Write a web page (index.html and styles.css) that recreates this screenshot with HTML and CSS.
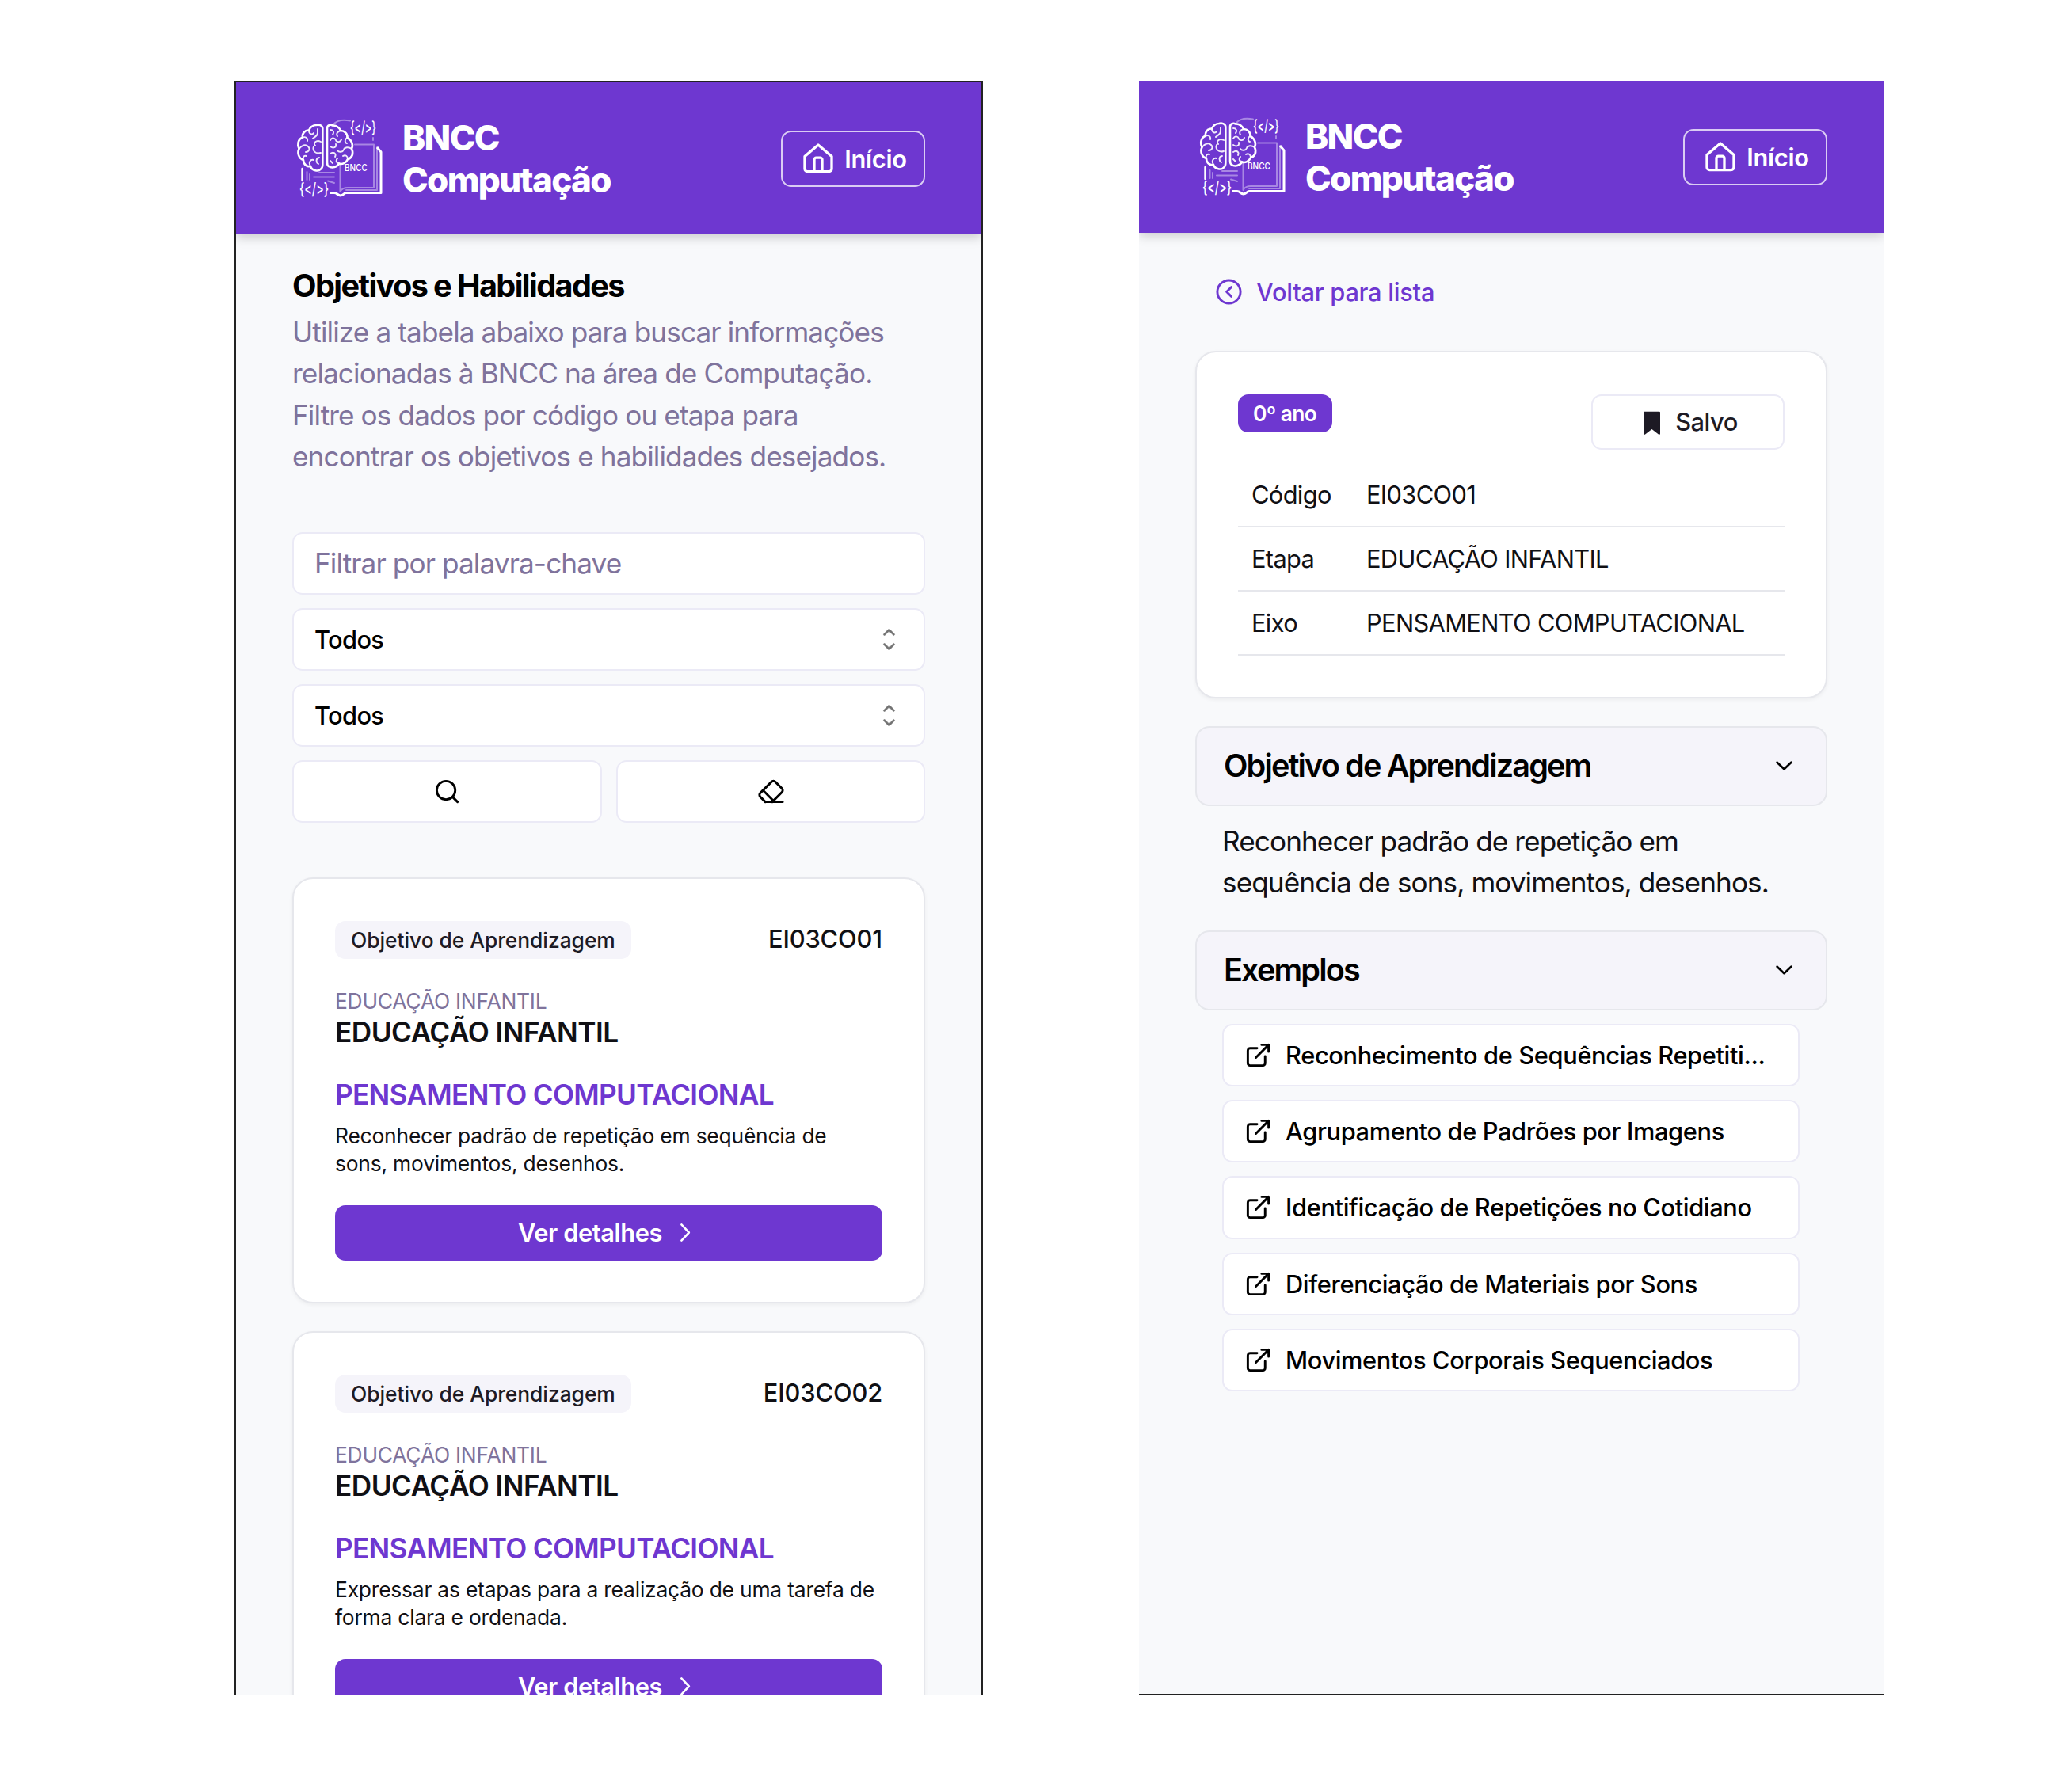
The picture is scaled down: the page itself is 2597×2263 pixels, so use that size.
FILE: index.html
```html
<!DOCTYPE html>
<html lang="pt-BR">
<head>
<meta charset="utf-8">
<title>BNCC Computação</title>
<link rel="stylesheet" href="styles.css">
</head>
<body>
<svg class="defs" aria-hidden="true">
  <symbol id="logo" viewBox="4 8 114 104">
    <g fill="none" stroke="#fff" stroke-linecap="round" stroke-linejoin="round">
      <g stroke-width="2.6">
        <path d="M42.300 22C42 18 37 17 34 18C29 18 26 22 25 24.500C20 24 16 29 17 33.500C11 36 10 43 12.500 48C10 53 12 60 18 62C18 68 23 71 27 70C29 76 37 77 40 73.500C42 72 42.300 70 42.300 68Z"/>
        <path d="M48 22C48 18 52 17 55 18.500C60 18 64 22 65 25C70 25 74 29 73.500 34C79 37 81.500 43 79 48C82 54 79 60 74 61C72 66 67 68 63 66.500C61 71 54 73 50 70C48 69 48 67 48 65Z"/>
      </g>
      <g stroke-width="1.900" opacity=".9">
        <path d="M25 25C25 29 29 31 31 28M36 23V28C36 32 32 33 30 35M17 34C20 32 24 34 23 38M12.500 48C16 43 21 42 24 45C27 48 25 52 21 52M40 39C34 36 30 41 33 44M40 53C33 55 29 50 31 45M18 62C17 58 19 56 22 57M27 70C24 65 27 61 31 62M38 59C33 60 34 65 37 67"/>
        <path d="M52 24C56 24 57 27 55 30M65 25C61 26 59 29 61 32M52 37C54 33 58 34 59 37C60 40 65 40 66 36M73 34C70 36 70 40 73 41M52 45C56 48 60 46 59 42M79 48C75 45 70 46 69 49C68 52 63 53 61 50M52 54C56 51 60 54 58 58M74 61C74 57 71 55 68 57M63 66C59 66 59 62 61 60M52 63L55 66"/>
      </g>
      <g stroke-width="2" opacity=".4">
        <path d="M56 17C61 11 69 11 77 12.500M83 42.500H107V97H74C70 97 66 99 64.500 102V67M106 34V37M111 46V100H72M38 78H57M31 83.500H57M49 88.500L57 91M22.500 77V87M26 80V87"/>
      </g>
      <path d="M16.500 73V88" stroke-width="2.400"/>
      <path d="M111 46L116 52V103.500H72C69 103.500 69 107 65 107C61 107 61 103.500 57 103.500H51" stroke-width="3" stroke-linecap="butt"/>
    </g>
  </symbol>
  <symbol id="home" viewBox="0 0 24 24"><path d="M9 22v-9a1.500 1.500 0 0 1 1.500-1.500h3A1.500 1.500 0 0 1 15 13v9M1.800 10.500 12 1.800l10.200 8.700V20a2 2 0 0 1-2 2H3.800a2 2 0 0 1-2-2z"/></symbol>
  <symbol id="sort" viewBox="0 0 15 15"><path d="M4.930 5.430a.45.45 0 0 0 .64 0L7.500 3.500l1.930 1.930a.45.45 0 0 0 .64-.64L7.820 2.540a.45.45 0 0 0-.64 0L4.930 4.790a.45.45 0 0 0 0 .64ZM4.930 9.570a.45.45 0 0 1 .64 0L7.500 11.500l1.930-1.930a.45.45 0 0 1 .64.64l-2.250 2.250a.45.45 0 0 1-.64 0l-2.250-2.250a.45.45 0 0 1 0-.64Z"/></symbol>
  <symbol id="search" viewBox="0 0 24 24"><circle cx="11" cy="11" r="8"/><path d="m21 21-4.300-4.300"/></symbol>
  <symbol id="eraser" viewBox="0 0 24 24"><path d="m7 21-4.300-4.300c-1-1-1-2.500 0-3.400l9.600-9.600c1-1 2.500-1 3.400 0l5.600 5.600c1 1 1 2.500 0 3.400L13 21"/><path d="M22 21H7"/><path d="m5 11 9 9"/></symbol>
  <symbol id="right" viewBox="0 0 15 15"><path d="m6.160 3.200 4.060 4.300-4.060 4.300"/></symbol>
  <symbol id="down" viewBox="0 0 15 15"><path d="m3.200 5.700 4.300 4.060 4.300-4.060"/></symbol>
  <symbol id="back" viewBox="0 0 24 24"><circle cx="12" cy="12" r="10"/><path d="m14 16-4-4 4-4"/></symbol>
  <symbol id="bookmark" viewBox="0 0 15 15"><path d="M3 2.500a.5.5 0 0 1 .5-.5h8a.5.5 0 0 1 .5.5v11.500a.5.5 0 0 1-.76.43L7.500 11.600l-3.740 2.830A.5.5 0 0 1 3 14z"/></symbol>
  <symbol id="external" viewBox="0 0 24 24"><path d="M15 3h6v6M10 14 21 3M18 13v6a2 2 0 0 1-2 2H5a2 2 0 0 1-2-2V8a2 2 0 0 1 2-2h6"/></symbol>
</svg>

<div class="phone phone-list">
  <header class="topbar">
    <svg class="logo" viewBox="4 8 114 104">
      <use href="#logo" x="4" y="8" width="114" height="104"/>
      <text x="77" y="28" font-size="20" textLength="33" lengthAdjust="spacingAndGlyphs">{&lt;/&gt;}</text>
      <text x="13" y="105.500" font-size="21" textLength="37" lengthAdjust="spacingAndGlyphs">{&lt;/&gt;}</text>
      <text x="70" y="76" font-size="11.500" textLength="29" lengthAdjust="spacingAndGlyphs">BNCC</text>
    </svg>
    <h1 class="brand">BNCC<br>Computação</h1>
    <a class="home"><svg class="icon"><use href="#home"/></svg><span>Início</span></a>
  </header>
  <main class="list">
    <h2 class="heading">Objetivos e Habilidades</h2>
    <p class="lead">Utilize a tabela abaixo para buscar informações<br>relacionadas à BNCC na área de Computação.<br>Filtre os dados por código ou etapa para<br>encontrar os objetivos e habilidades desejados.</p>
    <div class="filters">
      <div class="field placeholder">Filtrar por palavra-chave</div>
      <div class="field select"><span>Todos</span><svg class="icon sort"><use href="#sort"/></svg></div>
      <div class="field select"><span>Todos</span><svg class="icon sort"><use href="#sort"/></svg></div>
      <div class="actions">
        <button class="field"><svg class="icon"><use href="#search"/></svg></button>
        <button class="field clear"><svg class="icon"><use href="#eraser"/></svg></button>
      </div>
    </div>
    <article class="card">
      <div class="card-top"><span class="badge">Objetivo de Aprendizagem</span><span class="code">EI03CO01</span></div>
      <p class="stage">EDUCAÇÃO INFANTIL</p>
      <h3 class="year">EDUCAÇÃO INFANTIL</h3>
      <h3 class="axis">PENSAMENTO COMPUTACIONAL</h3>
      <p class="summary">Reconhecer padrão de repetição em sequência de<br>sons, movimentos, desenhos.</p>
      <a class="details"><span>Ver detalhes</span><svg class="icon thin"><use href="#right"/></svg></a>
    </article>
    <article class="card">
      <div class="card-top"><span class="badge">Objetivo de Aprendizagem</span><span class="code">EI03CO02</span></div>
      <p class="stage">EDUCAÇÃO INFANTIL</p>
      <h3 class="year">EDUCAÇÃO INFANTIL</h3>
      <h3 class="axis">PENSAMENTO COMPUTACIONAL</h3>
      <p class="summary">Expressar as etapas para a realização de uma tarefa de<br>forma clara e ordenada.</p>
      <a class="details"><span>Ver detalhes</span><svg class="icon thin"><use href="#right"/></svg></a>
    </article>
  </main>
</div>

<div class="phone phone-detail">
  <header class="topbar">
    <svg class="logo" viewBox="4 8 114 104">
      <use href="#logo" x="4" y="8" width="114" height="104"/>
      <text x="77" y="28" font-size="20" textLength="33" lengthAdjust="spacingAndGlyphs">{&lt;/&gt;}</text>
      <text x="13" y="105.500" font-size="21" textLength="37" lengthAdjust="spacingAndGlyphs">{&lt;/&gt;}</text>
      <text x="70" y="76" font-size="11.500" textLength="29" lengthAdjust="spacingAndGlyphs">BNCC</text>
    </svg>
    <h1 class="brand">BNCC<br>Computação</h1>
    <a class="home"><svg class="icon"><use href="#home"/></svg><span>Início</span></a>
  </header>
  <main class="detail">
    <a class="back"><svg class="icon"><use href="#back"/></svg><span>Voltar para lista</span></a>
    <section class="card">
      <div class="card-top"><span class="badge solid">0º ano</span><button class="saved"><svg class="icon filled"><use href="#bookmark"/></svg><span>Salvo</span></button></div>
      <dl class="facts">
        <div class="fact"><dt>Código</dt><dd>EI03CO01</dd></div>
        <div class="fact"><dt>Etapa</dt><dd>EDUCAÇÃO INFANTIL</dd></div>
        <div class="fact"><dt>Eixo</dt><dd>PENSAMENTO COMPUTACIONAL</dd></div>
      </dl>
    </section>
    <h2 class="fold"><span>Objetivo de Aprendizagem</span><svg class="icon thin"><use href="#down"/></svg></h2>
    <p class="goal">Reconhecer padrão de repetição em<br>sequência de sons, movimentos, desenhos.</p>
    <h2 class="fold"><span>Exemplos</span><svg class="icon thin"><use href="#down"/></svg></h2>
    <div class="links">
      <a class="field"><svg class="icon"><use href="#external"/></svg><span>Reconhecimento de Sequências Repetiti...</span></a>
      <a class="field"><svg class="icon"><use href="#external"/></svg><span>Agrupamento de Padrões por Imagens</span></a>
      <a class="field"><svg class="icon"><use href="#external"/></svg><span>Identificação de Repetições no Cotidiano</span></a>
      <a class="field"><svg class="icon"><use href="#external"/></svg><span>Diferenciação de Materiais por Sons</span></a>
      <a class="field"><svg class="icon"><use href="#external"/></svg><span>Movimentos Corporais Sequenciados</span></a>
    </div>
  </main>
</div>
</body>
</html>
```

FILE: styles.css
```css
:root {
  --primary: #6e37d0;
  --ink: #101014;
  --muted: #7f739c;
  --line: #ebeaf6;
  --card-line: #e6e7ec;
  --soft: #f5f4fa;
}

* { box-sizing: border-box; }

body {
  display: flex;
  align-items: flex-start;
  gap: 197px;
  width: 2597px;
  height: 2263px;
  margin: 0;
  padding: 102px 0 0 296px;
  overflow: hidden;
  background: #fff;
  color: var(--ink);
  font-family: Inter, "Liberation Sans", sans-serif;
  font-size: 30.8px;
}

h1, h2, h3, p, dl, dd { margin: 0; }

.defs { position: absolute; width: 0; height: 0; }

.phone {
  flex: none;
  height: 2039px;
  overflow: hidden;
  background: #f8f9fb;
}
.phone-list { width: 945px; border: 2px solid #222; border-width: 2px 2px 0; }
.phone-detail { width: 940px; border-bottom: 2px solid #222; }

.icon {
  flex: none;
  width: 35px;
  height: 35px;
  fill: none;
  stroke: currentColor;
  stroke-width: 2;
  stroke-linecap: round;
  stroke-linejoin: round;
}
.icon.thin { stroke-width: 1.1; }
.icon.filled { fill: currentColor; stroke: none; }

.topbar {
  position: relative;
  display: flex;
  align-items: center;
  height: 192px;
  padding: 0 71px;
  background: var(--primary);
  color: #fff;
  box-shadow: 0 4px 13px rgba(0, 0, 0, .18);
}
.logo {
  flex: none;
  width: 114px;
  height: 104px;
  overflow: visible;
  fill: #fff;
  font-weight: 500;
}
.brand {
  margin-left: 25px;
  padding-top: 2px;
  font-size: 44px;
  line-height: 53px;
  font-weight: 800;
  letter-spacing: -1.65px;
}
.home {
  display: flex;
  align-items: center;
  justify-content: center;
  gap: 13px;
  width: 182px;
  height: 71px;
  margin-left: auto;
  padding-left: 4px;
  border: 2px solid rgba(255, 255, 255, .75);
  border-radius: 13px;
  font-weight: 600;
  letter-spacing: -.3px;
}
.home .icon { width: 40px; height: 40px; }

.list { padding: 45px 71px 0; }
.heading {
  font-size: 39.6px;
  line-height: 41px;
  font-weight: 700;
  letter-spacing: -1.57px;
  color: #000;
}
.lead {
  margin-top: 11px;
  font-size: 35.2px;
  line-height: 52.4px;
  letter-spacing: -.9px;
  color: var(--muted);
  white-space: nowrap;
}
.filters { display: grid; gap: 17px; margin: 69px 0; }
.field {
  display: flex;
  align-items: center;
  height: 79.2px;
  padding: 0 26px;
  border: 2px solid var(--line);
  border-radius: 13px;
  background: #fff;
  color: #000;
  font-weight: 500;
  letter-spacing: -.37px;
  white-space: nowrap;
}
.select { padding-right: 24px; letter-spacing: -.65px; }
.placeholder {
  color: var(--muted);
  font-size: 35.2px;
  font-weight: 400;
  letter-spacing: -.9px;
}
.icon.sort {
  width: 39px;
  height: 39px;
  margin-left: auto;
  fill: currentColor;
  stroke-width: .2;
  opacity: .55;
}
.actions { display: grid; grid-template-columns: 1fr 1fr; gap: 18px; }
.actions .field { justify-content: center; }
.actions .clear { padding-left: 28px; }

.card {
  padding: 53px 52px;
  border: 2px solid var(--card-line);
  border-radius: 26px;
  background: #fff;
  box-shadow: 0 2px 5px rgba(0, 0, 0, .05);
}
.list .card { height: 538px; margin-bottom: 34.5px; }
.card-top { display: flex; align-items: flex-start; justify-content: space-between; }
.badge {
  padding: 0 20px;
  border-radius: 13px;
  background: var(--soft);
  color: #1d1a24;
  font-size: 26.4px;
  line-height: 48px;
  font-weight: 500;
  letter-spacing: -.05px;
}
.badge.solid {
  padding-left: 19px;
  background: var(--primary);
  color: #fff;
  font-weight: 600;
  letter-spacing: -.6px;
}
.code { line-height: 45px; font-weight: 500; letter-spacing: -.12px; }
.stage {
  margin-top: 36px;
  font-size: 26.4px;
  line-height: 35px;
  letter-spacing: -.25px;
  color: var(--muted);
}
.year, .axis { font-size: 35.2px; line-height: 35px; font-weight: 600; }
.year { margin-top: 4px; letter-spacing: -.5px; }
.axis { margin-top: 44px; letter-spacing: -.7px; color: var(--primary); }
.summary {
  margin-top: 17px;
  font-size: 26.4px;
  line-height: 35px;
  letter-spacing: -.2px;
  white-space: nowrap;
}
.details {
  display: flex;
  align-items: center;
  justify-content: center;
  gap: 10px;
  height: 70px;
  margin-top: 35px;
  padding: 0 2px 1px 0;
  border-radius: 13px;
  background: var(--primary);
  color: #fff;
  font-weight: 600;
  letter-spacing: -.42px;
}

.detail { padding: 39px 71px 0; }
.back {
  display: flex;
  align-items: center;
  gap: 17px;
  height: 71px;
  margin-bottom: 39px;
  padding-left: 25px;
  color: var(--primary);
  font-weight: 500;
  letter-spacing: -.27px;
}
.detail .card { height: 439px; margin-bottom: 35px; }
.saved {
  display: flex;
  align-items: center;
  justify-content: center;
  gap: 12px;
  width: 244px;
  height: 70px;
  padding-bottom: 2px;
  border: 2px solid var(--line);
  border-radius: 13px;
  background: #fff;
  color: #1d1a24;
  font: 500 30.8px Inter, sans-serif;
  letter-spacing: -.5px;
}
.facts { margin-top: 17px; }
.fact {
  display: grid;
  grid-template-columns: 144px 1fr;
  align-items: center;
  height: 81px;
  border-bottom: 2px solid var(--card-line);
  letter-spacing: -.65px;
  white-space: nowrap;
}
.fact dt { padding-left: 17px; }
.fact dd { padding-left: 18px; }
.fold {
  display: flex;
  align-items: center;
  justify-content: space-between;
  height: 101px;
  padding: 0 37px 2px 34px;
  border: 2px solid var(--card-line);
  border-radius: 18px;
  background: var(--soft);
  color: #000;
  font-size: 39.6px;
  font-weight: 600;
  letter-spacing: -1.85px;
}
.fold .icon { width: 31px; height: 31px; stroke-width: 1.3; }
.goal {
  margin: 18px 0 35px;
  padding-left: 34px;
  font-size: 35.2px;
  line-height: 52px;
  letter-spacing: -.93px;
  white-space: nowrap;
}
.links { display: grid; gap: 17px; padding: 17px 35px 0 34px; }
.links .field { gap: 17px; }
```
